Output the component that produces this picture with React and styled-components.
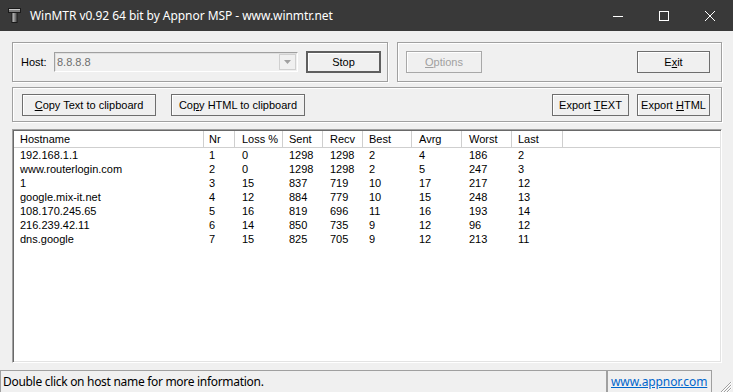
import React from "react";
import styled, { createGlobalStyle } from "styled-components";

const Global = createGlobalStyle`
  html, body { margin: 0; padding: 0; background: #f0f0f0; }
  body { width: 733px; height: 392px; overflow: hidden; }
  * { box-sizing: border-box; }
`;

const Window = styled.div`
  width: 733px;
  height: 392px;
  display: flex;
  flex-direction: column;
  background: #f0f0f0;
  font-family: "Liberation Sans", Arial, sans-serif;
  font-size: 11px;
  color: #000;
`;

const TitleBar = styled.div`
  height: 31px;
  flex: 0 0 31px;
  background: #393939;
  display: flex;
  align-items: center;
  color: #fff;
  font-family: "Noto Sans", "Open Sans", sans-serif;
  font-size: 12px;
`;

const TitleIcon = styled.svg`
  margin-left: 8px;
  width: 13px;
  height: 15px;
  flex: 0 0 13px;
`;

const TitleText = styled.div`
  margin-left: 9px;
  flex: 1;
  white-space: nowrap;
  letter-spacing: -0.05px;
`;

const Controls = styled.div`
  display: flex;
  height: 100%;
`;

const Ctrl = styled.div`
  width: 46px;
  height: 100%;
  display: flex;
  align-items: center;
  justify-content: center;
`;

const Content = styled.div`
  flex: 1;
  display: flex;
  flex-direction: column;
  padding: 11px 11px 0 12px;
`;

const Row = styled.div`
  display: flex;
  gap: 9px;
  height: 40px;
`;

const Group = styled.div`
  height: ${(p) => p.$h || 40}px;
  width: ${(p) => (p.$w ? p.$w + "px" : "auto")};
  flex: ${(p) => (p.$w ? "0 0 auto" : "1")};
  border: 1px solid #a0a0a0;
  box-shadow: inset 1px 1px 0 #fff, 1px 1px 0 #fff;
  display: flex;
  align-items: center;
  padding: ${(p) => p.$pad || "0"};
  margin-top: ${(p) => p.$mt || 0}px;
`;

const Spacer = styled.div`
  flex: 1;
`;

const Label = styled.div`
  flex: 0 0 33px;
  color: #000;
`;

const Combo = styled.div`
  width: 244px;
  height: 20px;
  border: 1px solid #a0a0a0;
  border-right-color: #fff;
  border-bottom-color: #fff;
  box-shadow: inset 1px 1px 0 #e0e0e0;
  background: #f0f0f0;
  display: flex;
  align-items: center;
  color: #6d6d6d;
  padding-left: 2px;
`;

const ComboText = styled.div`
  flex: 1;
`;

const ComboArrow = styled.div`
  width: 17px;
  height: 16px;
  margin-right: 1px;
  border: 1px solid #d0d0d0;
  background: #f0f0f0;
  display: flex;
  align-items: center;
  justify-content: center;
`;

const Button = styled.div`
  width: ${(p) => p.$w}px;
  height: ${(p) => p.$h || 22}px;
  margin-left: ${(p) => p.$ml || 0}px;
  flex: 0 0 auto;
  border: ${(p) => (p.$default ? "2px solid" : "1px solid")};
  border-color: ${(p) => (p.$disabled ? "#a8a8a8" : p.$default ? "#5f5f5f" : "#6e6e6e")};
  box-shadow: inset 1px 1px 0 #fff;
  background: #f0f0f0;
  color: ${(p) => (p.$disabled ? "#a0a0a0" : "#000")};
  display: flex;
  align-items: center;
  justify-content: center;
  white-space: nowrap;
  u { text-decoration: underline; text-underline-offset: 1px; }
`;

const TableWrap = styled.div`
  margin-top: 7px;
  height: 234px;
  border: 1px solid #a0a0a0;
  border-right-color: #fff;
  border-bottom-color: #fff;
  box-shadow: inset 1px 1px 0 #696969, inset -1px -1px 0 #e3e3e3;
  background: #fff;
  padding: 1px;
  overflow: hidden;
`;

const Grid = styled.div`
  display: grid;
  grid-template-columns: 190px 31px 48px 40px 40px 49px 50px 50px 51px 1fr;
`;

const HeadCell = styled.div`
  height: 17px;
  line-height: 17px;
  padding-left: ${(p) => p.$pl || 5}px;
  border-bottom: 1px solid #cfcfcf;
  border-right: ${(p) => (p.$last ? "none" : "1px solid #cfcfcf")};
  white-space: nowrap;
  background: #fff;
`;

const Cell = styled.div`
  height: 14px;
  line-height: 14px;
  padding-left: ${(p) => p.$pl || 5}px;
  white-space: nowrap;
`;

const StatusBar = styled.div`
  margin-top: 7px;
  height: 22px;
  flex: 0 0 22px;
  display: flex;
`;

const StatusPanel = styled.div`
  width: ${(p) => (p.$w ? p.$w + "px" : "auto")};
  flex: ${(p) => (p.$w ? "0 0 auto" : "1")};
  border-top: 1px solid #a0a0a0;
  border-left: 1px solid #a0a0a0;
  border-right: 1px solid #a0a0a0;
  display: flex;
  align-items: center;
  padding-left: ${(p) => p.$pl || 2}px;
  font-family: "Noto Sans", "Open Sans", sans-serif;
  font-size: 12px;
  white-space: nowrap;
  letter-spacing: ${(p) => p.$ls || "-0.3px"};
`;

const Link = styled.span`
  color: #0066cc;
  text-decoration: underline;
`;

const Grip = styled.svg`
  width: 21px;
  height: 22px;
  flex: 0 0 21px;
`;

const columns = [
  { key: "host", label: "Hostname", pl: 6 },
  { key: "nr", label: "Nr" },
  { key: "loss", label: "Loss %", pl: 7 },
  { key: "sent", label: "Sent", pl: 6 },
  { key: "recv", label: "Recv", pl: 7 },
  { key: "best", label: "Best", pl: 6 },
  { key: "avrg", label: "Avrg", pl: 7 },
  { key: "worst", label: "Worst", pl: 7 },
  { key: "last", label: "Last", pl: 6 },
];

const rows = [
  ["192.168.1.1", 1, 0, 1298, 1298, 2, 4, 186, 2],
  ["www.routerlogin.com", 2, 0, 1298, 1298, 2, 5, 247, 3],
  ["1", 3, 15, 837, 719, 10, 17, 217, 12],
  ["google.mix-it.net", 4, 12, 884, 779, 10, 15, 248, 13],
  ["108.170.245.65", 5, 16, 819, 696, 11, 16, 193, 14],
  ["216.239.42.11", 6, 14, 850, 735, 9, 12, 96, 12],
  ["dns.google", 7, 15, 825, 705, 9, 12, 213, 11],
];

export default function App() {
  return (
    <>
      <Global />
      <Window>
        <TitleBar>
          <TitleIcon viewBox="0 0 13 15">
            <rect x="0.5" y="0.5" width="12" height="4" fill="#7d7d7d" stroke="#1a1a1a" />
            <rect x="4" y="4.5" width="5" height="10" fill="#6e6e6e" stroke="#1a1a1a" />
            <rect x="1" y="1" width="11" height="1" fill="#c8c8c8" />
            <rect x="4.5" y="5" width="2" height="9" fill="#a8a8a8" />
          </TitleIcon>
          <TitleText>WinMTR v0.92 64 bit by Appnor MSP - www.winmtr.net</TitleText>
          <Controls>
            <Ctrl>
              <svg width="10" height="10" viewBox="0 0 10 10">
                <line x1="0" y1="5.5" x2="10" y2="5.5" stroke="#fff" strokeWidth="1" />
              </svg>
            </Ctrl>
            <Ctrl>
              <svg width="10" height="10" viewBox="0 0 10 10">
                <rect x="0.5" y="0.5" width="9" height="9" fill="none" stroke="#fff" strokeWidth="1" />
              </svg>
            </Ctrl>
            <Ctrl>
              <svg width="10" height="10" viewBox="0 0 10 10">
                <path d="M0 0 L10 10 M10 0 L0 10" stroke="#fff" strokeWidth="1" />
              </svg>
            </Ctrl>
          </Controls>
        </TitleBar>
        <Content>
          <Row>
            <Group $w={376} $pad="0 0 0 8px">
              <Label>Host:</Label>
              <Combo>
                <ComboText>8.8.8.8</ComboText>
                <ComboArrow>
                  <svg width="7" height="4" viewBox="0 0 7 4">
                    <path d="M0 0 L7 0 L3.5 4 Z" fill="#a0a0a0" />
                  </svg>
                </ComboArrow>
              </Combo>
              <Button $w={75} $h={22} $ml={8} $default>
                Stop
              </Button>
            </Group>
            <Group $pad="0 11px 0 8px">
              <Button $w={76} $disabled>
                <span>
                  <u>O</u>ptions
                </span>
              </Button>
              <Spacer />
              <Button $w={73}>
                <span>
                  E<u>x</u>it
                </span>
              </Button>
            </Group>
          </Row>
          <Group $h={35} $mt={5} $pad="0 11px 0 9px">
            <Button $w={134}>
              <span>
                <u>C</u>opy Text to clipboard
              </span>
            </Button>
            <Button $w={134} $ml={15}>
              <span>
                Co<u>p</u>y HTML to clipboard
              </span>
            </Button>
            <Spacer />
            <Button $w={77}>
              <span>
                Export <u>T</u>EXT
              </span>
            </Button>
            <Button $w={73} $ml={8}>
              <span>
                Export <u>H</u>TML
              </span>
            </Button>
          </Group>
          <TableWrap>
            <Grid>
              {columns.map((c) => (
                <HeadCell key={c.key} $pl={c.pl}>
                  {c.label}
                </HeadCell>
              ))}
              <HeadCell $last />
              {rows.map((r, i) => (
                <React.Fragment key={i}>
                  {r.map((v, j) => (
                    <Cell key={j} $pl={columns[j].pl}>
                      {v}
                    </Cell>
                  ))}
                  <Cell />
                </React.Fragment>
              ))}
            </Grid>
          </TableWrap>
        </Content>
        <StatusBar>
          <StatusPanel $pl={2}>Double click on host name for more information.</StatusPanel>
          <StatusPanel $w={105} $pl={3} $ls="-0.1px">
            <Link>www.appnor.com</Link>
          </StatusPanel>
          <Grip viewBox="0 0 21 22">
            <g stroke="#a0a0a0" strokeWidth="1">
              <line x1="19" y1="12" x2="9" y2="22" />
              <line x1="19" y1="15" x2="12" y2="22" />
              <line x1="19" y1="18" x2="15" y2="22" />
            </g>
            <g stroke="#fff" strokeWidth="1">
              <line x1="20" y1="12" x2="10" y2="22" />
              <line x1="20" y1="15" x2="13" y2="22" />
              <line x1="20" y1="18" x2="16" y2="22" />
            </g>
          </Grip>
        </StatusBar>
      </Window>
    </>
  );
}
